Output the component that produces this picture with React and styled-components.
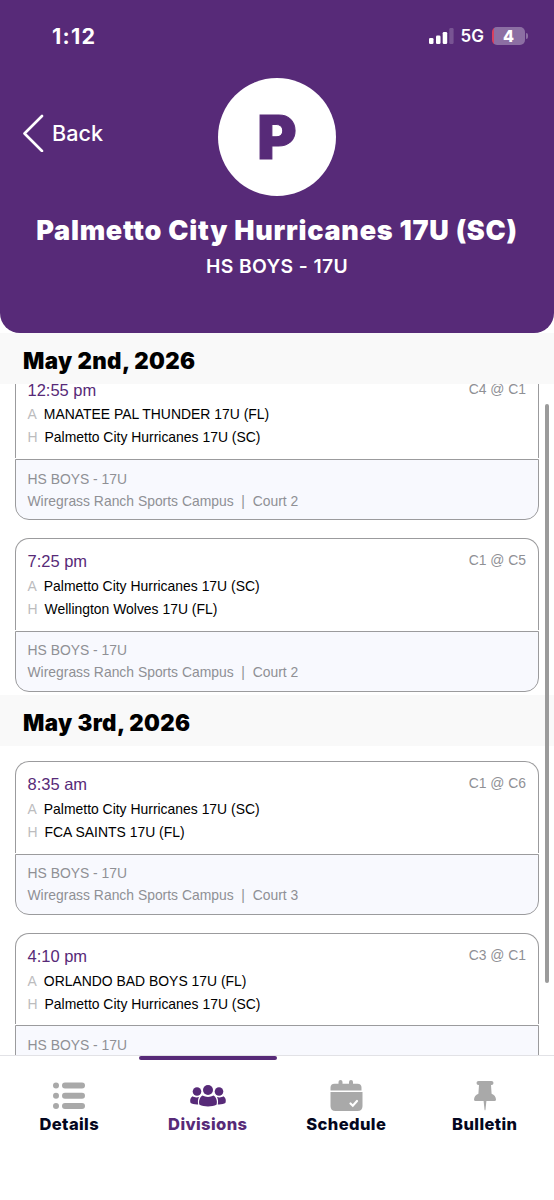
import React from 'react';
import styled, { createGlobalStyle } from 'styled-components';

const GlobalStyle = createGlobalStyle`
  :root {
    --main: #572a78;
    --border: #9b9b9d;
    --muted: #8f9095;
    --icon: #a9a9a9;
  }

  * {
    box-sizing: border-box;
  }

  body {
    margin: 0;
    background: #fff;
    font-family: Inter, "Liberation Sans", sans-serif;
  }

  h1, h2, h3, p {
    margin: 0;
  }
`

// Style variables
const styleArial = `
  font-family: "Liberation Sans", Arial, sans-serif;
`

// Layout
const Screen = styled.div`
  width: 554px;
  height: 1200px;
  display: flex;
  flex-direction: column;
  overflow: hidden;
`

const Header = styled.header`
  height: 333px;
  flex: none;
  display: flex;
  flex-direction: column;
  color: #fff;
  background: var(--main);
  border-radius: 0 0 20px 20px;
`

const StatusBar = styled.div`
  height: 72px;
  display: flex;
  align-items: center;
  justify-content: space-between;
  padding: 0 27px 1px 52px;
`

const Clock = styled.span`
  font-size: 21.5px;
  font-weight: 700;
  letter-spacing: 1.3px;
`

const StatusIcons = styled.div`
  display: flex;
  align-items: center;
`

const Network = styled.span`
  font-size: 17px;
  font-weight: 600;
  margin: 0 8px 0 7px;
`

const Battery = styled.div`
  width: 33px;
  height: 18px;
  border-radius: 5px;
  background: linear-gradient(90deg, #d8405f 0 2px, #8c6fa3 2px);
  font-size: 16px;
  font-weight: 800;
  line-height: 18px;
  text-align: center;
`

const BatteryTip = styled.span`
  width: 2px;
  height: 6px;
  margin-left: 1px;
  margin-right: -1px;
  border-radius: 0 2px 2px 0;
  background: #8c6fa3;
`

const TeamBar = styled.div`
  height: 130px;
  display: grid;
  grid-template-columns: 1fr 118px 1fr;
  align-items: center;
`

const BackButton = styled.button`
  display: flex;
  align-items: center;
  gap: 8px;
  padding: 0 0 8px 22px;
  border: none;
  background: none;
  color: inherit;
  font: 500 21.6px Inter, sans-serif;
`

const Logo = styled.div`
  height: 118px;
  border-radius: 50%;
  background: #fff;
  color: var(--main);
  font-size: 60px;
  font-weight: 900;
  line-height: 118px;
  text-align: center;
  -webkit-text-stroke: 1px var(--main);
`

const TeamName = styled.h1`
  margin-top: 12px;
  font-size: 27px;
  font-weight: 900;
  line-height: 34px;
  letter-spacing: 0.75px;
  text-align: center;
  white-space: nowrap;
`

const TeamDivision = styled.p`
  margin-top: 6px;
  font-size: 19.3px;
  font-weight: 600;
  line-height: 24px;
  letter-spacing: 0.4px;
  text-align: center;
`

const List = styled.main`
  position: relative;
  height: 722px;
  flex: none;
  overflow: hidden;
`

const DateTitle = styled.h2`
  position: relative;
  z-index: 1;
  height: 51px;
  padding: 2px 0 0 23px;
  background: #f9f9f9;
  font-size: 22.3px;
  font-weight: 900;
  line-height: 51px;
  letter-spacing: 0.4px;
`

const Games = styled.div`
  display: flex;
  flex-direction: column;
  gap: 18.3px;
  margin-top: ${props => props.$scrolled ? '-17.3px' : '15.4px'};
  padding: 0 15px 3.4px;
`

const Card = styled.article`
  ${styleArial}
  height: 153.3px;
  flex: none;
  display: flex;
  flex-direction: column;
`

const CardBody = styled.div`
  height: 91.3px;
  margin-bottom: 1px;
  padding: 12px 12px 0 11.5px;
  border: 1px solid var(--border);
  border-bottom: none;
  border-radius: 14px 14px 0 0;
`

const CardTop = styled.div`
  display: flex;
  justify-content: space-between;
  margin-bottom: 2.6px;
  line-height: 22px;
`

const Time = styled.span`
  margin-top: -1px;
  color: var(--main);
  font-size: 16.5px;
`

const Matchup = styled.span`
  color: var(--muted);
  font-size: 13.9px;
  line-height: 19px;
`

const Team = styled.p`
  display: flex;
  gap: 7px;
  font-size: 13.93px;
  line-height: 23px;
  color: #000;

  span {
    color: #bcbcbe;
  }
`

const CardFooter = styled.div`
  height: 61px;
  padding: 7.6px 12px 0 11.5px;
  border: 1px solid var(--border);
  border-radius: 0 0 14px 14px;
  background: #f8f9fe;
  color: var(--muted);
  font-size: 13.9px;
  line-height: 22px;
  white-space: pre;
`

const ScrollThumb = styled.div`
  position: absolute;
  z-index: 2;
  top: 71px;
  right: 5px;
  width: 4px;
  height: 579px;
  border-radius: 2px;
  background: #9b9b9b;
`

const TabBar = styled.nav`
  flex: 1;
  display: grid;
  grid-template-columns: repeat(4, 1fr);
  border-top: 1px solid #e2e2e6;
`

const Tab = styled.a`
  display: flex;
  flex-direction: column;
  align-items: center;
  color: ${props => props.$active ? 'var(--main)' : '#040720'};
  font-size: 16.5px;
  font-weight: 800;
  line-height: 22px;
  letter-spacing: 0.4px;

  &:before {
    content: "";
    width: 100%;
    height: 4px;
    margin-bottom: 18px;
    border-radius: 2px;
    background: ${props => props.$active ? 'var(--main)' : 'transparent'};
  }

  svg {
    margin-bottom: 1px;
    color: ${props => props.$active ? 'var(--main)' : 'var(--icon)'};
  }
`

// Icons
const SignalIcon = () => (
  <svg width="25" height="18" viewBox="0 0 25 18" fill="#fff">
    <rect x="0" y="11" width="4.5" height="6" rx="1.3" />
    <rect x="7" y="8.5" width="4.5" height="8.5" rx="1.3" />
    <rect x="13.7" y="5" width="4.5" height="12" rx="1.3" />
    <rect x="20.3" y="1" width="4.3" height="16" rx="1.3" opacity="0.2" />
  </svg>
)

const BackIcon = () => (
  <svg width="22" height="38" viewBox="0 0 22 38" fill="none" stroke="#fff" strokeWidth="2.6" strokeLinecap="round" strokeLinejoin="round">
    <path d="M20 2L2.5 19.5L20 37" />
  </svg>
)

const ListIcon = () => (
  <svg width="34" height="34" viewBox="0 0 34 34" fill="currentColor">
    {[7.5, 17.8, 28].map(y => (
      <g key={y}>
        <circle cx="4" cy={y} r="3" />
        <rect x="10" y={y - 3} width="23" height="6" rx="3" />
      </g>
    ))}
  </svg>
)

const GroupIcon = () => (
  <svg width="38" height="34" viewBox="0 0 38 34" fill="currentColor">
    <circle cx="8" cy="13.5" r="4.3" />
    <circle cx="30" cy="13.5" r="4.3" />
    <circle cx="19" cy="12" r="5" />
    <path d="M3.6 18.3C5 19.5 8 19.8 10 19C8.8 21 8.7 24 9.2 26.4C6 26.6 3 26 1.6 25C.6 22.5 1.4 19.5 3.6 18.3Z" />
    <path d="M34.4 18.3C33 19.5 30 19.8 28 19C29.2 21 29.3 24 28.8 26.4C32 26.6 35 26 36.4 25C37.4 22.5 36.6 19.5 34.4 18.3Z" />
    <path d="M13.5 17.5C16.5 19.4 21.5 19.4 24.5 17.5C27.6 19.5 28.6 23.5 27.5 26.8C23 28.9 15 28.9 10.5 26.8C9.4 23.5 10.4 19.5 13.5 17.5Z" />
  </svg>
)

const CalendarIcon = () => (
  <svg width="34" height="34" viewBox="0 0 34 34" fill="currentColor">
    <path d="M1.5 12.6V9.5Q1.5 5.7 5.5 5.7H9.5V4Q9.5 2 11.5 2T13.5 4V5.7H20V4Q20 2 22 2T24 4V5.7H28.5Q32.5 5.7 32.5 9.5V12.6H1.5Z" />
    <path d="M1.5 14H33.5V28Q33.5 33 28.5 33H6.5Q1.5 33 1.5 28Z" />
    <path d="M21.5 25.5L23.8 27.7L28 23" fill="none" stroke="#fff" strokeWidth="2.2" strokeLinecap="round" />
  </svg>
)

const PinIcon = () => (
  <svg width="24" height="34" viewBox="0 0 24 34" fill="currentColor">
    <path d="M5.5 3H18.5Q20.5 3 20.5 5T18.5 7H18L18.6 15.8Q22.8 17.6 23 21.5Q23 23 21.5 23H2.5Q1 23 1 21.5Q1.2 17.6 5.4 15.8L6 7H5.5Q3.5 7 3.5 5T5.5 3Z" />
    <path d="M10.5 22H13.5L12.5 31.5Q12 33.5 11.5 31.5Z" />
  </svg>
)

const PALMETTO = 'Palmetto City Hurricanes 17U (SC)'

const days = [
  {
    date: 'May 2nd, 2026',
    scrolled: true,
    games: [
      { time: '12:55 pm', matchup: 'C4 @ C1', away: 'MANATEE PAL THUNDER 17U (FL)', home: PALMETTO, court: 2 },
      { time: '7:25 pm', matchup: 'C1 @ C5', away: PALMETTO, home: 'Wellington Wolves 17U (FL)', court: 2 },
    ],
  },
  {
    date: 'May 3rd, 2026',
    games: [
      { time: '8:35 am', matchup: 'C1 @ C6', away: PALMETTO, home: 'FCA SAINTS 17U (FL)', court: 3 },
      { time: '4:10 pm', matchup: 'C3 @ C1', away: 'ORLANDO BAD BOYS 17U (FL)', home: PALMETTO },
    ],
  },
]

const tabs = [
  { label: 'Details', Icon: ListIcon },
  { label: 'Divisions', Icon: GroupIcon, active: true },
  { label: 'Schedule', Icon: CalendarIcon },
  { label: 'Bulletin', Icon: PinIcon },
]

const GameCard = ({ game }) => (
  <Card>
    <CardBody>
      <CardTop>
        <Time>{game.time}</Time>
        <Matchup>{game.matchup}</Matchup>
      </CardTop>
      <Team><span>A</span>{game.away}</Team>
      <Team><span>H</span>{game.home}</Team>
    </CardBody>
    <CardFooter>
      <p>HS BOYS - 17U</p>
      {game.court && <p>{'Wiregrass Ranch Sports Campus  |  Court ' + game.court}</p>}
    </CardFooter>
  </Card>
)

export default function App() {
  return (
    <Screen>
      <GlobalStyle />

      <Header>
        <StatusBar>
          <Clock>1:12</Clock>
          <StatusIcons>
            <SignalIcon />
            <Network>5G</Network>
            <Battery>4</Battery>
            <BatteryTip />
          </StatusIcons>
        </StatusBar>
        <TeamBar>
          <BackButton><BackIcon />Back</BackButton>
          <Logo>P</Logo>
        </TeamBar>
        <TeamName>{PALMETTO}</TeamName>
        <TeamDivision>HS BOYS - 17U</TeamDivision>
      </Header>

      <List>
        {days.map(day => (
          <section key={day.date}>
            <DateTitle>{day.date}</DateTitle>
            <Games $scrolled={day.scrolled}>
              {day.games.map(game => <GameCard key={game.time} game={game} />)}
            </Games>
          </section>
        ))}
        <ScrollThumb />
      </List>

      <TabBar>
        {tabs.map(({ label, Icon, active }) => (
          <Tab key={label} $active={active}>
            <Icon />
            {label}
          </Tab>
        ))}
      </TabBar>
    </Screen>
  );
}
